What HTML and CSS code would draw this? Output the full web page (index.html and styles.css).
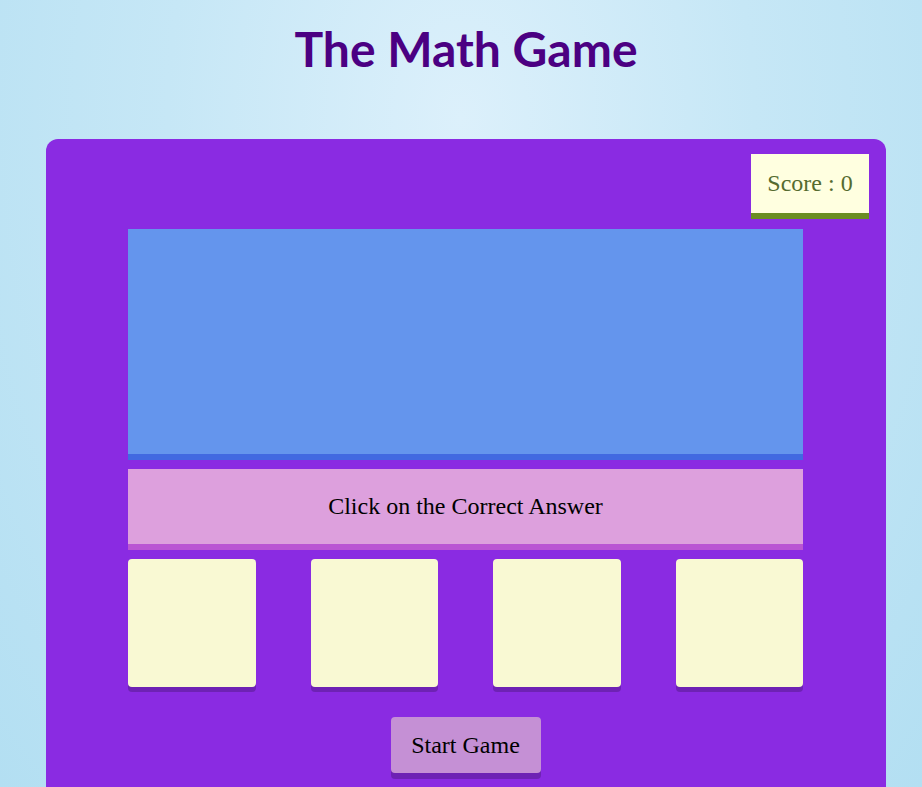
FILE: index.html
```html
<!DOCTYPE html>
<html lang="en">
<head>
<meta charset="utf-8">
<title>The Math Game</title>
<link rel="stylesheet" href="styles.css">
</head>
<body>
<h1 class="title">The Math Game</h1>
<div class="container">
  <div class="score"><span class="score-label">Score : <span class="score-value">0</span></span></div>
  <div class="question"></div>
  <div class="instruction">Click on the Correct Answer</div>
  <div class="choices">
    <div class="box"></div>
    <div class="box"></div>
    <div class="box"></div>
    <div class="box"></div>
  </div>
  <div class="start">Start Game</div>
</div>
</body>
</html>
```

FILE: styles.css
```css
html, body {
  margin: 0;
  padding: 0;
}
body {
  min-height: 787px;
  background: radial-gradient(ellipse at 50% 15%, #dcf0fb 0%, #c6e7f6 45%, #b3dff2 100%);
  font-family: "Liberation Serif", "Times New Roman", serif;
  overflow: hidden;
}
.title {
  margin: 21px 0 0 0;
  padding-left: 10px;
  text-align: center;
  font-family: Lato, "Noto Sans", sans-serif;
  font-weight: 700;
  font-size: 48px;
  line-height: 56px;
  color: #4b0082;
}
.container {
  position: relative;
  box-sizing: border-box;
  width: 840px;
  height: 648px;
  margin: 62px 0 0 46px;
  padding: 90px 83px 0 82px;
  background: #8a2be2;
  border-radius: 12px 12px 0 0;
}
.score {
  position: absolute;
  top: 15px;
  right: 17px;
  width: 118px;
  height: 59px;
  display: flex;
  align-items: center;
  justify-content: center;
  background: #ffffe0;
  color: #556b2f;
  font-size: 24px;
  box-shadow: 0 6px 0 #6b8e23;
}
.question {
  height: 225px;
  background: #6495ed;
  box-shadow: 0 6px 0 #4169e1;
}
.instruction {
  margin-top: 15px;
  height: 75px;
  display: flex;
  align-items: center;
  justify-content: center;
  background: #dda0dd;
  box-shadow: 0 6px 0 #ba55d3;
  font-size: 24px;
  color: #000;
}
.choices {
  margin-top: 15px;
  display: flex;
  justify-content: space-between;
}
.box {
  width: 127.5px;
  height: 128px;
  background: #f9f9d3;
  border-radius: 4px;
  box-shadow: 0 5px 0 rgba(0, 0, 0, 0.2);
}
.start {
  margin: 30px auto 0 auto;
  width: 150px;
  height: 56px;
  display: flex;
  align-items: center;
  justify-content: center;
  background: #c590d5;
  border-radius: 4px;
  box-shadow: 0 6px 0 rgba(0, 0, 0, 0.2);
  font-size: 24px;
  color: #000;
}
```
